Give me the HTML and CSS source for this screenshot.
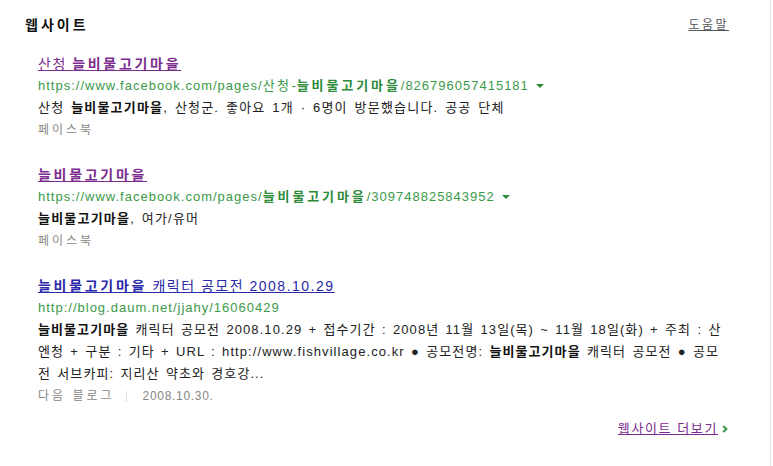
FILE: index.html
```html
<!DOCTYPE html>
<html lang="ko">
<head>
<meta charset="utf-8">
<link rel="stylesheet" href="styles.css">
</head>
<body>
<div class="page">
  <div class="head">
    <h2 class="head-title">웹사이트</h2>
    <a class="help" href="#">도움말</a>
  </div>
  <ul class="results">
    <li class="item">
      <a class="title visited" href="#">산청 <b>늘비물고기마을</b></a>
      <div class="url">https://www.facebook.com/pages/<span class="k">산청</span>-<b>늘비물고기마을</b>/826796057415181<span class="caret"></span></div>
      <p class="desc">산청 <b>늘비물고기마을</b>, 산청군. 좋아요 1개 · 6명이 방문했습니다. 공공 단체</p>
      <div class="src">페이스북</div>
    </li>
    <li class="item">
      <a class="title visited" href="#"><b>늘비물고기마을</b></a>
      <div class="url">https://www.facebook.com/pages/<b>늘비물고기마을</b>/309748825843952<span class="caret"></span></div>
      <p class="desc"><b>늘비물고기마을</b>, 여가/유머</p>
      <div class="src">페이스북</div>
    </li>
    <li class="item">
      <a class="title fresh" href="#"><b>늘비물고기마을</b> 캐릭터 공모전 2008.10.29</a>
      <div class="url">http://blog.daum.net/jjahy/16060429</div>
      <p class="desc desc-long"><b>늘비물고기마을</b> 캐릭터 공모전 2008.10.29 + 접수기간 : 2008년 11월 13일(목) ~ 11월 18일(화) + 주최 : 산<br>엔청 + 구분 : 기타 + URL : http://www.fishvillage.co.kr ● 공모전명: <b>늘비물고기마을</b> 캐릭터 공모전 ● 공모<br>전 서브카피: 지리산 약초와 경호강...</p>
      <div class="src">다음 블로그<span class="sep"></span><span class="date">2008.10.30.</span></div>
    </li>
  </ul>
  <div class="more-row">
    <a class="more" href="#">웹사이트 더보기</a>
    <svg class="chev" width="6" height="8" viewBox="0 0 6 8" aria-hidden="true"><polyline points="1.2,1 4.4,4 1.2,7" fill="none" stroke="#3a9a4a" stroke-width="2"/></svg>
  </div>
</div>
</body>
</html>
```
FILE: styles.css
```css
html, body {
  margin: 0;
  padding: 0;
  background: #fff;
}
body {
  font-family: "Liberation Sans", "Noto Sans CJK KR", sans-serif;
  color: #111;
}
.page {
  width: 770px;
  height: 466px;
  border-right: 1px solid #e4e4e4;
}
.head {
  display: flex;
  justify-content: space-between;
  align-items: center;
  padding: 14px 41px 0 25px;
  height: 22px;
}
.head-title {
  margin: 0;
  font-size: 14px;
  font-weight: bold;
  line-height: 22px;
  letter-spacing: 3px;
  color: #111;
}
.help {
  font-size: 12px;
  color: #555;
  text-decoration: underline;
  letter-spacing: 2.5px;
  line-height: 22px;
}
.results {
  list-style: none;
  margin: 17px 0 0;
  padding: 0 0 0 38px;
  display: flex;
  flex-direction: column;
  gap: 23px;
}
.item {
  display: flex;
  flex-direction: column;
  align-items: flex-start;
}
.title {
  font-size: 14px;
  line-height: 22px;
  letter-spacing: 1.5px;
  text-decoration: underline;
}
.title b {
  font-weight: bold;
  letter-spacing: 2.7px;
}
.visited { color: #7b2d8e; }
.fresh { color: #2a2aa8; }
.url {
  font-size: 13px;
  line-height: 22px;
  letter-spacing: 1px;
  color: #3a9a4a;
  display: flex;
  align-items: center;
  white-space: nowrap;
}
.url b {
  color: #2c8a3a;
  letter-spacing: 2.9px;
}
.url .k { letter-spacing: 2.4px; }
.caret {
  display: inline-block;
  margin-left: 7px;
  width: 0;
  height: 0;
  border-left: 4px solid transparent;
  border-right: 4px solid transparent;
  border-top: 4px solid #2c8a3a;
}
.desc {
  margin: 0;
  font-size: 13px;
  line-height: 22px;
  letter-spacing: 1.2px;
  word-spacing: 2px;
  color: #222;
  white-space: nowrap;
}
.desc-long {
  letter-spacing: 1.08px;
  word-spacing: 1.6px;
}
.desc b { color: #111; }
.src {
  font-size: 12px;
  line-height: 22px;
  letter-spacing: 3px;
  color: #888;
  display: flex;
  align-items: center;
}
.date { letter-spacing: 0.7px; }
.sep {
  display: inline-block;
  width: 1px;
  height: 11px;
  background: #ddd;
  margin: 0 16px 0 11px;
}
.more-row {
  display: flex;
  justify-content: flex-end;
  align-items: center;
  gap: 4px;
  margin-top: 11px;
  padding-right: 42px;
  line-height: 22px;
}
.more {
  font-size: 13px;
  color: #7b2d8e;
  letter-spacing: 1.6px;
  text-decoration: underline;
}
.chev { display: block; }
```
